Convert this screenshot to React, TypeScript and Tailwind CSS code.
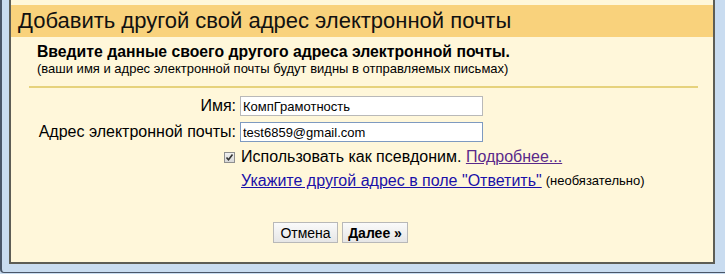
import React from "react";

export default function App() {
  return (
    <div className="w-[725px] h-[274px] bg-[#c9dcf0] overflow-hidden" style={{ fontFamily: '"Liberation Sans", Arial, sans-serif' }}>
      <div className="flex h-[273px] border-l-2 border-b border-[#4a5668] rounded-bl-[4px] pl-[7px] pr-[10px] pb-[8px]">
        <div className="flex-1 border-l-2 border-r-2 border-b-2 border-[#5d5d55] bg-[#fff7da] flex flex-col">
          <div className="bg-[#fff7da] h-[5px]" />
          <div className="bg-[#f9d27c] h-[32px] flex items-center pl-[7px]">
            <span className="text-[22px] text-[#111] leading-none">Добавить другой свой адрес электронной почты</span>
          </div>
          <div className="pt-[6px]">
            <div className="pl-[26px] text-[15.75px] font-bold text-black leading-[18px]">Введите данные своего другого адреса электронной почты.</div>
            <div className="pl-[26px] text-[13px] text-black leading-[16px]">(ваши имя и адрес электронной почты будут видны в отправляемых письмах)</div>
            <div className="h-[2px] bg-[#e6d27c] mt-[9px] ml-[18px] mr-[15px]" />
          </div>
          <div className="flex flex-col mt-[8px]">
            <div className="flex items-center h-[20px]">
              <label className="w-[229px] text-right text-[16px] text-black pr-[4px]">Имя:</label>
              <input className="w-[243px] h-[20px] border border-[#b9b9b9] bg-white px-[2px] text-[13px] text-black outline-none" style={{ fontFamily: '"Liberation Sans", Arial, sans-serif' }} defaultValue="КомпГрамотность" />
            </div>
            <div className="flex items-center h-[20px] mt-[6px]">
              <label className="w-[229px] text-right text-[16px] text-black pr-[4px]">Адрес электронной почты:</label>
              <input className="w-[243px] h-[20px] border border-[#7e9ac0] bg-white px-[2px] text-[13px] text-black outline-none" style={{ fontFamily: '"Liberation Sans", Arial, sans-serif' }} defaultValue="test6859@gmail.com" />
            </div>
            <div className="flex items-center h-[20px] mt-[5px]">
              <div className="w-[229px] flex justify-end pr-[5px]">
                <div className="w-[11px] h-[11px] border border-[#8f8f8f] bg-gradient-to-b from-[#f0f0f0] to-[#d8d8d8] flex items-center justify-center">
                  <svg width="9" height="9" viewBox="0 0 9 9"><path d="M1.5 4.5 L3.5 6.8 L7.5 1.5" stroke="#333" strokeWidth="1.6" fill="none" /></svg>
                </div>
              </div>
              <span className="ml-[1px] text-[16px] text-black">Использовать как псевдоним. <a className="text-[#5a2a8a] underline" href="#">Подробнее...</a></span>
            </div>
            <div className="flex items-center h-[20px] mt-[4px] pl-[230px]">
              <a className="text-[16px] text-[#1a10a8] underline" href="#">Укажите другой адрес в поле "Ответить"</a>
              <span className="text-[13px] text-black ml-[4px]">(необязательно)</span>
            </div>
            <div className="flex justify-start pl-[262px] mt-[31px] gap-[4px]">
              <button className="h-[21px] w-[65px] border border-[#b8b8b8] bg-gradient-to-b from-[#fafafa] to-[#e6e6e6] text-[14px] text-black">Отмена</button>
              <button className="h-[21px] w-[66px] border border-[#b8b8b8] bg-gradient-to-b from-[#fafafa] to-[#e6e6e6] text-[14px] font-bold text-black">Далее »</button>
            </div>
          </div>
        </div>
      </div>
    </div>
  );
}
